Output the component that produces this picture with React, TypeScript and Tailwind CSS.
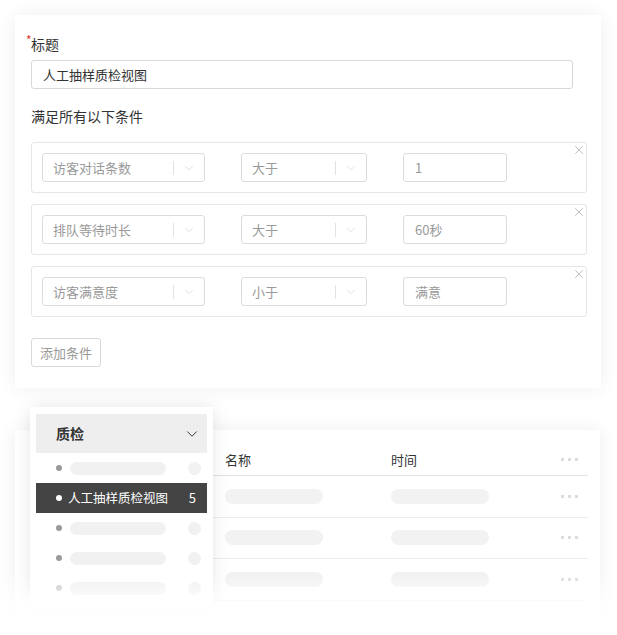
import { ChevronDown, X } from "lucide-react";

const font = { fontFamily: '"Noto Sans CJK SC", "Noto Sans", sans-serif' };

interface Condition {
  field: string;
  op: string;
  value: string;
}

const conditions: Condition[] = [
  { field: "访客对话条数", op: "大于", value: "1" },
  { field: "排队等待时长", op: "大于", value: "60秒" },
  { field: "访客满意度", op: "小于", value: "满意" },
];

function Select({ label, width }: { label: string; width: string }) {
  return (
    <div className={`flex h-[29px] items-center rounded-[3px] border border-[#dcdcdc] bg-white ${width}`}>
      <span className="flex-1 pl-[10px] text-[13px] text-[#999]">{label}</span>
      <span className="h-[14px] w-px bg-[#e2e2e2]" />
      <span className="flex w-[30px] items-center justify-center text-[#c8c8c8]">
        <ChevronDown size={14} strokeWidth={1} />
      </span>
    </div>
  );
}

function Dots() {
  return (
    <div className="flex w-[17px] items-center gap-[4px]">
      <span className="h-[3px] w-[3px] bg-[#dcdcdc]" />
      <span className="h-[3px] w-[3px] bg-[#dcdcdc]" />
      <span className="h-[3px] w-[3px] bg-[#dcdcdc]" />
    </div>
  );
}

function MenuItem({ fade }: { fade?: boolean }) {
  return (
    <div className="flex h-[30px] items-center">
      <span className={`ml-[20px] h-[6px] w-[6px] rounded-full ${fade ? "bg-[#c4c4c4]" : "bg-[#9a9a9a]"}`} />
      <span className="ml-[8px] h-[13px] w-[96px] rounded-full bg-[#f1f1f1]" />
      <span className="ml-[22px] h-[13px] w-[13px] rounded-full bg-[#f1f1f1]" />
    </div>
  );
}

export default function App() {
  return (
    <div className="relative h-[635px] w-[617px] overflow-hidden bg-white px-[15px] pt-[15px]" style={font}>
      {/* form card */}
      <div className="w-[586px] bg-white px-[16px] pb-[21px] pt-[20px] shadow-[0_0_18px_rgba(0,0,0,0.07)]">
        <div className="relative text-[14px] leading-[18px] text-[#333]">
          <span className="absolute -left-[5px] -top-[4px] text-[12px] text-[#e2382c]">*</span>
          标题
        </div>
        <div className="mt-[7px] flex h-[29px] w-[542px] items-center rounded-[3px] border border-[#d9d9d9] pl-[11px] text-[13px] text-[#333]">
          人工抽样质检视图
        </div>
        <div className="mt-[18px] text-[14px] leading-[18px] text-[#333]">满足所有以下条件</div>

        <div className="mt-[17px] flex flex-col gap-[11px]">
          {conditions.map((c) => (
            <div key={c.field} className="relative flex h-[51px] w-[556px] items-center rounded-[3px] border border-[#e6e6e6] pl-[10px]">
              <Select label={c.field} width="w-[163px]" />
              <div className="ml-[36px]">
                <Select label={c.op} width="w-[126px]" />
              </div>
              <div className="ml-[36px] flex h-[29px] w-[104px] items-center rounded-[3px] border border-[#dcdcdc] pl-[11px] text-[13px] text-[#999]">
                {c.value}
              </div>
              <X size={14} strokeWidth={1.1} className="absolute right-0 top-0 text-[#999]" />
            </div>
          ))}
        </div>

        <div className="mt-[21px] flex h-[29px] w-[70px] items-center justify-center rounded-[3px] border border-[#d9d9d9] text-[13px] text-[#999]">
          添加条件
        </div>
      </div>

      {/* list card */}
      <div className="mt-[42px] h-[220px] w-[585px] bg-white pl-[16px] pr-[12px] pt-[14px] shadow-[0_0_18px_rgba(0,0,0,0.07)]">
        <div className="flex h-[32px] items-center border-b border-[#e2e2e2] text-[13px] text-[#333]">
          <span className="w-[194px]" />
          <span className="w-[166px]">名称</span>
          <span className="flex-1">时间</span>
          <Dots />
          <span className="w-[10px]" />
        </div>
        {[0, 1, 2].map((i) => (
          <div key={i} className="flex h-[41.5px] items-center border-b border-[#ededed]">
            <span className="w-[194px]" />
            <span className="w-[166px]">
              <span className="block h-[15px] w-[98px] rounded-full bg-[#f2f2f2]" />
            </span>
            <span className="flex-1">
              <span className="block h-[15px] w-[98px] rounded-full bg-[#f2f2f2]" />
            </span>
            <Dots />
            <span className="w-[10px]" />
          </div>
        ))}
      </div>

      {/* dropdown over the list */}
      <div className="absolute left-[30px] top-[407px] h-[200px] w-[183px] bg-white px-[6px] pt-[7px] shadow-[0_0_16px_rgba(0,0,0,0.1)]">
        <div className="flex h-[39px] items-center justify-between bg-[#eeeeee] pl-[20px] pr-[6px]">
          <span className="text-[14px] font-bold text-[#333]">质检</span>
          <ChevronDown size={18} strokeWidth={1.3} className="text-[#333]" />
        </div>
        <MenuItem />
        <div className="flex h-[30px] items-center bg-[#444444] text-white">
          <span className="ml-[20px] h-[6px] w-[6px] rounded-full bg-white" />
          <span className="ml-[6px] flex-1 text-[12.5px]">人工抽样质检视图</span>
          <span className="mr-[11px] text-[13px]">5</span>
        </div>
        <MenuItem />
        <MenuItem />
        <MenuItem fade />
      </div>

      {/* bottom fade */}
      <div className="pointer-events-none absolute bottom-0 left-0 h-[60px] w-full bg-gradient-to-b from-white/0 via-white/90 to-white" />
    </div>
  );
}
